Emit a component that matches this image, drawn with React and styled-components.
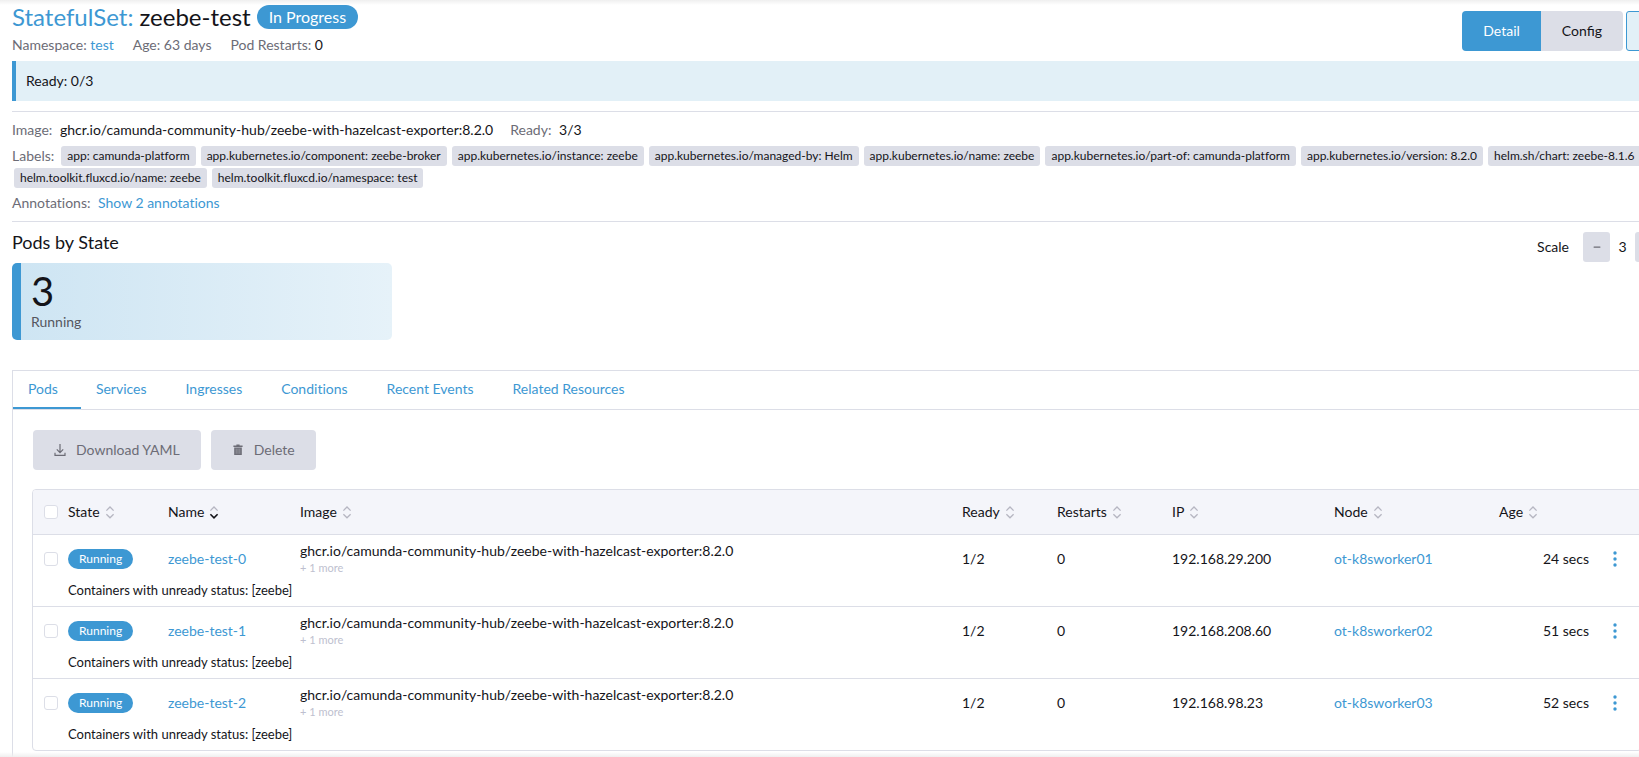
import React, { useState } from "react";
import styled, { createGlobalStyle } from "styled-components";
import { Minus, Plus } from "lucide-react";

const labels = [
    "app: camunda-platform",
    "app.kubernetes.io/component: zeebe-broker",
    "app.kubernetes.io/instance: zeebe",
    "app.kubernetes.io/managed-by: Helm",
    "app.kubernetes.io/name: zeebe",
    "app.kubernetes.io/part-of: camunda-platform",
    "app.kubernetes.io/version: 8.2.0",
    "helm.sh/chart: zeebe-8.1.6",
    "helm.toolkit.fluxcd.io/name: zeebe",
    "helm.toolkit.fluxcd.io/namespace: test",
];

const tabs = ["Pods", "Services", "Ingresses", "Conditions", "Recent Events", "Related Resources"];

const columns = [
    { label: "State", width: 100 },
    { label: "Name", width: 132, sorted: true },
    { label: "Image" },
    { label: "Ready", width: 95 },
    { label: "Restarts", width: 115 },
    { label: "IP", width: 162 },
    { label: "Node", width: 165 },
    { label: "Age", width: 90 },
];

const image = "ghcr.io/camunda-community-hub/zeebe-with-hazelcast-exporter:8.2.0";

const pods = [
    { name: "zeebe-test-0", ip: "192.168.29.200", node: "ot-k8sworker01", age: "24 secs" },
    { name: "zeebe-test-1", ip: "192.168.208.60", node: "ot-k8sworker02", age: "51 secs" },
    { name: "zeebe-test-2", ip: "192.168.98.23", node: "ot-k8sworker03", age: "52 secs" },
];

const GlobalStyle = createGlobalStyle`
    * {
        box-sizing: border-box;
    }

    body {
        margin: 0;
        overflow: hidden;
        background: #ffffff;
        color: #141419;
        font-family: Lato, "Open Sans", sans-serif;
        font-size: 14px;
        line-height: 20px;
    }

    button {
        border: none;
        font: inherit;
        color: inherit;
        cursor: pointer;
    }

    a {
        color: #3d98d3;
        text-decoration: none;
    }
`;

const App = () => {
    const [activeTab, setActiveTab] = useState("Pods");

    return <Viewport>
        <GlobalStyle />
        <Main>
            <Masthead>
                <div>
                    <Title>
                        <a href="#statefulsets">StatefulSet:</a> zeebe-test <TitleBadge>In Progress</TitleBadge>
                    </Title>
                    <Meta>
                        <span>Namespace: <a href="#test">test</a></span>
                        <span>Age: 63 days</span>
                        <span>Pod Restarts: <Strong>0</Strong></span>
                    </Meta>
                </div>
                <Actions>
                    <Segment $active>Detail</Segment>
                    <Segment>Config</Segment>
                    <MenuButton aria-label="Actions"><Dots /></MenuButton>
                </Actions>
            </Masthead>

            <Banner>Ready: 0/3</Banner>

            <Details>
                <DetailRow>
                    <span>Image: <Value>{ image }</Value></span>
                    <span>Ready: <Value>3/3</Value></span>
                </DetailRow>
                <Labels>
                    <LabelsTitle>Labels:</LabelsTitle>
                    { labels.map(l => <Chip key={ l }>{ l }</Chip>) }
                </Labels>
                <div>Annotations: <AnnotationLink href="#annotations">Show 2 annotations</AnnotationLink></div>
            </Details>

            <StateBar>
                <div>
                    <SectionTitle>Pods by State</SectionTitle>
                    <StateCard>
                        <Count>3</Count>
                        <CountLabel>Running</CountLabel>
                    </StateCard>
                </div>
                <Scale>
                    <ScaleLabel>Scale</ScaleLabel>
                    <ScaleButton aria-label="Decrease"><Minus size={ 10 } strokeWidth={ 3 } /></ScaleButton>
                    <ScaleValue>3</ScaleValue>
                    <ScaleButton aria-label="Increase"><Plus size={ 10 } strokeWidth={ 3 } /></ScaleButton>
                </Scale>
            </StateBar>

            <Panel>
                <TabList role="tablist">
                    { tabs.map(tab =>
                        <Tab
                        key={ tab } role="tab" aria-selected={ tab === activeTab }
                        $active={ tab === activeTab } onClick={ () => setActiveTab(tab) }
                        >
                            { tab }
                        </Tab>
                    ) }
                </TabList>

                <PanelBody>
                    <Toolbar>
                        <BulkButton disabled><DownloadIcon />Download YAML</BulkButton>
                        <BulkButton disabled><TrashIcon />Delete</BulkButton>
                    </Toolbar>
                    <PodTable />
                </PanelBody>
            </Panel>
        </Main>
    </Viewport>
}

const PodTable = () => {
    return <TableFrame>
        <Table>
            <colgroup>
                <Col $width={ 35 } />
                { columns.map(c => <Col key={ c.label } $width={ c.width } />) }
                <Col $width={ 52 } />
            </colgroup>
            <thead>
                <tr>
                    <CheckHead><Checkbox aria-label="Select all" /></CheckHead>
                    { columns.map(c =>
                        <HeadCell key={ c.label }>
                            <HeadLabel>{ c.label }<SortIcon sorted={ c.sorted } /></HeadLabel>
                        </HeadCell>
                    ) }
                    <HeadCell />
                </tr>
            </thead>
            { pods.map(pod =>
                <PodBody key={ pod.name }>
                    <tr>
                        <CheckCell><Checkbox aria-label={ "Select " + pod.name } /></CheckCell>
                        <Cell><StateBadge>Running</StateBadge></Cell>
                        <Cell><a href={ "#" + pod.name }>{ pod.name }</a></Cell>
                        <ImageCell>{ image }<More>+ 1 more</More></ImageCell>
                        <Cell>1/2</Cell>
                        <Cell>0</Cell>
                        <Cell>{ pod.ip }</Cell>
                        <Cell><a href={ "#" + pod.node }>{ pod.node }</a></Cell>
                        <Cell $align="right">{ pod.age }</Cell>
                        <Cell>
                            <RowMenu aria-label={ "Actions for " + pod.name }><Dots /></RowMenu>
                        </Cell>
                    </tr>
                    <tr>
                        <td />
                        <MessageCell colSpan={ 9 }>Containers with unready status: [zeebe]</MessageCell>
                    </tr>
                </PodBody>
            ) }
        </Table>
    </TableFrame>
}

const SortIcon = ({ sorted }) =>
    <svg width="10" height="14" viewBox="0 0 10 14" fill="none" strokeWidth="1.3">
        <path d="M1.4 5.6 5 2l3.6 3.6" stroke="#b6b6c2" />
        <path d="M1.4 9.2 5 12.8l3.6-3.6" stroke={ sorted ? "#141419" : "#b6b6c2" } strokeWidth={ sorted ? 1.6 : 1.3 } />
    </svg>

const Dots = () =>
    <svg width="4" height="16" viewBox="0 0 4 16" fill="#3d98d3">
        <circle cx="2" cy="2" r="1.7" />
        <circle cx="2" cy="8" r="1.7" />
        <circle cx="2" cy="14" r="1.7" />
    </svg>

const DownloadIcon = () =>
    <svg width="12" height="14" viewBox="0 0 12 14" fill="none" stroke="#6c6c76" strokeWidth="1.2">
        <path d="M6 1v8.4M2.8 6.4 6 9.6l3.2-3.2M1 9.8v2.6h10V9.8" />
    </svg>

const TrashIcon = () =>
    <svg width="12" height="14" viewBox="0 0 12 14">
        <path d="M4.4 1.6h3.2v1H10.6v1.3H1.4V2.6h3zM2.2 4.6h7.6V12H2.2z" fill="#6c6c76" />
        <path d="M4.2 5.6v5.2M6 5.6v5.2M7.8 5.6v5.2" stroke="#a2a3ad" strokeWidth="0.7" />
    </svg>

const Viewport = styled.div`
    position: relative;
    display: flex;
    height: 100vh;
    overflow: hidden;

    &::before,
    &::after {
        content: "";
        position: absolute;
        left: 0;
        right: 0;
        height: 5px;
        background: linear-gradient(#efefef, #ffffff00);
    }

    &::before {
        top: 0;
    }

    &::after {
        bottom: 0;
        background: linear-gradient(#ffffff00, #efefef);
    }
`;

/* the content runs a little past the right edge of the window */
const Main = styled.main`
    flex: 1;
    min-width: 0;
    display: flex;
    flex-direction: column;
    margin-right: -23px;
    padding: 3px 0 0 12px;

    > * {
        flex-shrink: 0;
    }
`;

const Masthead = styled.header`
    display: flex;
    justify-content: space-between;
    height: 58px;
`;

const Title = styled.h1`
    display: flex;
    align-items: center;
    gap: 6px;
    margin: 0;
    font-size: 24px;
    font-weight: 400;
    line-height: 28px;
`;

const TitleBadge = styled.span`
    padding: 0 12px;
    border-radius: 12px;
    background: #3d98d3;
    color: #ffffff;
    font-size: 16px;
    line-height: 24px;
`;

const Meta = styled.div`
    display: flex;
    gap: 19px;
    margin-top: 4px;
    color: #6c6c76;
`;

const Strong = styled.span`
    color: #141419;
`;

const Actions = styled.div`
    display: flex;
    height: 40px;
    margin-top: 8px;
`;

const Segment = styled.button`
    padding: 0 21px;
    border-radius: ${ p => p.$active ? "4px 0 0 4px" : "0 4px 4px 0" };
    background: ${ p => p.$active ? "#3d98d3" : "#dcdee7" };
    color: ${ p => p.$active ? "#ffffff" : "#141419" };
`;

const MenuButton = styled.button`
    width: 36px;
    margin-left: 3px;
    border: 1px solid #3d98d3;
    border-radius: 3px;
    background: #e2f0f7;
`;

const Banner = styled.div`
    padding: 10px;
    border-left: 4px solid #3d98d3;
    background: #e2f0f7;
`;

const Details = styled.section`
    margin-top: 10px;
    padding: 8px 0;
    border-top: 1px solid #dcdee7;
    border-bottom: 1px solid #dcdee7;
    color: #6c6c76;
    font-variant-ligatures: no-common-ligatures;
`;

const DetailRow = styled.div`
    display: flex;
    gap: 17px;
`;

const Value = styled.span`
    margin-left: 4px;
    color: #141419;
`;

const Labels = styled.div`
    display: flex;
    flex-wrap: wrap;
    gap: 2px 3px;
    margin: 6px 0 5px;
`;

const LabelsTitle = styled.span`
    margin-right: 2px;
`;

const Chip = styled.span`
    margin-left: 2px;
    padding: 0 6px;
    border-radius: 3px;
    background: #dcdee7;
    color: #141419;
    font-size: 12px;
`;

const AnnotationLink = styled.a`
    margin-left: 4px;
`;

const StateBar = styled.section`
    display: flex;
    justify-content: space-between;
    padding: 10px 0 30px;
`;

const SectionTitle = styled.h3`
    margin: 0 0 11px;
    font-size: 18px;
    font-weight: 400;
    line-height: 20px;
`;

const StateCard = styled.div`
    width: 380px;
    padding: 8px 10px;
    border-left: 9px solid #3d98d3;
    border-radius: 5px;
    background: linear-gradient(to right, #cee5f3, #e6f2f9);
`;

const Count = styled.div`
    font-size: 40px;
    line-height: 41px;
`;

const CountLabel = styled.div`
    color: #55565f;
`;

const Scale = styled.div`
    display: flex;
    align-items: center;
    height: 30px;
`;

const ScaleLabel = styled.span`
    margin-right: 14px;
`;

const ScaleButton = styled.button`
    display: flex;
    align-items: center;
    justify-content: center;
    width: 27px;
    height: 30px;
    padding: 0;
    border-radius: 3px;
    background: #dcdee7;
    color: #6c6c76;
`;

const ScaleValue = styled.span`
    width: 25px;
    text-align: center;
`;

const Panel = styled.section`
    flex-grow: 1;
    border: 1px solid #dcdee7;
`;

const TabList = styled.div`
    display: flex;
    height: 39px;
    border-bottom: 1px solid #dcdee7;
    font-variant-ligatures: no-common-ligatures;
`;

const Tab = styled.button`
    padding: 0 23px 0 15px;
    border-bottom: 2px solid ${ p => p.$active ? "#3d98d3" : "transparent" };
    background: none;
    color: #3d98d3;

    & + & {
        padding-right: 24px;
    }
`;

const PanelBody = styled.div`
    padding: 20px;
`;

const Toolbar = styled.div`
    display: flex;
    gap: 10px;
    margin-bottom: 19px;
`;

const BulkButton = styled.button`
    display: flex;
    align-items: center;
    gap: 10px;
    height: 40px;
    padding: 0 21px;
    border-radius: 4px;
    background: #dcdee7;
    color: #6c6c76;
    cursor: default;
`;

const TableFrame = styled.div`
    overflow: hidden;
    margin: 0 -1px;
    border: 1px solid #dcdee7;
    border-radius: 4px;
`;

const Table = styled.table`
    width: 100%;
    table-layout: fixed;
    border-collapse: separate;
    border-spacing: 0;
`;

const Col = styled.col`
    width: ${ p => p.$width ? p.$width + "px" : "auto" };
`;

const HeadCell = styled.th`
    height: 45px;
    padding: 0 0 1px;
    border-bottom: 1px solid #dcdee7;
    background: #f4f5fa;
    font-weight: 400;
    text-align: left;
`;

const CheckHead = styled(HeadCell)`
    padding-left: 11px;
`;

const HeadLabel = styled.div`
    display: flex;
    align-items: center;
    gap: 5px;
`;

const PodBody = styled.tbody`
    & + & tr:first-child td {
        border-top: 1px solid #dcdee7;
    }
`;

const Cell = styled.td`
    box-sizing: content-box;
    height: 47px;
    padding: 0;
    text-align: ${ p => p.$align || "left" };
`;

const CheckCell = styled(Cell)`
    padding-left: 11px;
`;

const ImageCell = styled(Cell)`
    line-height: 18px;
`;

const More = styled.div`
    color: #bebfcf;
    font-size: 11px;
    line-height: 16px;
`;

const MessageCell = styled.td`
    height: 24px;
    padding: 0;
    font-size: 13px;
    line-height: 16px;
    vertical-align: top;
`;

const StateBadge = styled.span`
    display: inline-block;
    padding: 0 11px;
    border-radius: 10px;
    background: #3d98d3;
    color: #ffffff;
    font-size: 12px;
    line-height: 20px;
`;

const RowMenu = styled.button`
    display: block;
    margin: 0 auto;
    padding: 0 8px;
    background: none;

    svg {
        display: block;
    }
`;

const Checkbox = styled.input.attrs({ type: "checkbox" })`
    appearance: none;
    display: block;
    width: 14px;
    height: 14px;
    margin: 0;
    border: 1px solid #dcdee7;
    border-radius: 3px;
    background: #ffffff;

    &:checked {
        background: #3d98d3;
    }
`;

export default App;
